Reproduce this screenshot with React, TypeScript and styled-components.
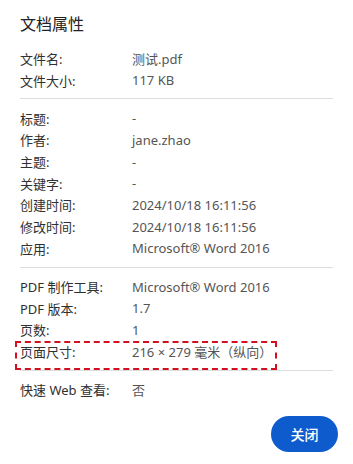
import styled, { createGlobalStyle } from "styled-components";

interface Field {
  label: string;
  value: string;
  marked?: boolean;
}

const sections: Field[][] = [
  [
    { label: "文件名:", value: "测试.pdf" },
    { label: "文件大小:", value: "117 KB" }
  ],
  [
    { label: "标题:", value: "-" },
    { label: "作者:", value: "jane.zhao" },
    { label: "主题:", value: "-" },
    { label: "关键字:", value: "-" },
    { label: "创建时间:", value: "2024/10/18 16:11:56" },
    { label: "修改时间:", value: "2024/10/18 16:11:56" },
    { label: "应用:", value: "Microsoft® Word 2016" }
  ],
  [
    { label: "PDF 制作工具:", value: "Microsoft® Word 2016" },
    { label: "PDF 版本:", value: "1.7" },
    { label: "页数:", value: "1" },
    { label: "页面尺寸:", value: "216 × 279 毫米（纵向）", marked: true }
  ],
  [{ label: "快速 Web 查看:", value: "否" }]
];

const App = () => {
  return (
    <>
      <GlobalStyle />
      <Dialog>
        <Title>文档属性</Title>
        {sections.map((fields, i) => (
          <Section key={i} $last={i === sections.length - 1}>
            {fields.map((f) => (
              <Row key={f.label} $marked={f.marked}>
                <Label>{f.label}</Label>
                <Value>{f.value}</Value>
              </Row>
            ))}
          </Section>
        ))}
        <Footer>
          <CloseButton>关闭</CloseButton>
        </Footer>
      </Dialog>
    </>
  );
};

const GlobalStyle = createGlobalStyle`
  body {
    margin: 0;
    background: #ffffff;
    font-family: "Noto Sans", "Noto Sans CJK SC", sans-serif;
  }
`;

const Dialog = styled.div`
  width: 353px;
  height: 464px;
  box-sizing: border-box;
  padding: 13px 20px 0;
  display: flex;
  flex-direction: column;
`;

const Title = styled.h2`
  margin: 0 0 12.5px;
  font-size: 16px;
  font-weight: 400;
  line-height: 22px;
  color: #222222;
`;

const Section = styled.div<{ $last?: boolean }>`
  padding: 0 0 7.5px;
  margin-bottom: 8px;
  border-bottom: ${(p) => (p.$last ? "none" : "1px solid #dedede")};
`;

const Row = styled.div<{ $marked?: boolean }>`
  position: relative;
  display: flex;
  height: 21.7px;
  align-items: center;
  font-size: 13px;
  &::after {
    content: "";
    display: ${(p) => (p.$marked ? "block" : "none")};
    position: absolute;
    left: -5px;
    top: 0;
    width: 262px;
    height: 29px;
    box-sizing: border-box;
    border: 2px dashed #d2101f;
  }
`;

const Label = styled.span`
  width: 112px;
  flex-shrink: 0;
  color: #303030;
`;

const Value = styled.span`
  color: #555555;
`;

const Footer = styled.div`
  margin-top: auto;
  display: flex;
  justify-content: flex-end;
  padding: 0 0 12px;
  margin-right: -5px;
`;

const CloseButton = styled.button`
  width: 67px;
  height: 36px;
  border: none;
  border-radius: 18px;
  background: #0d5bcd;
  color: #ffffff;
  font-family: "Noto Sans CJK SC", sans-serif;
  font-size: 14px;
  font-weight: 500;
  cursor: pointer;
`;

export default App;
